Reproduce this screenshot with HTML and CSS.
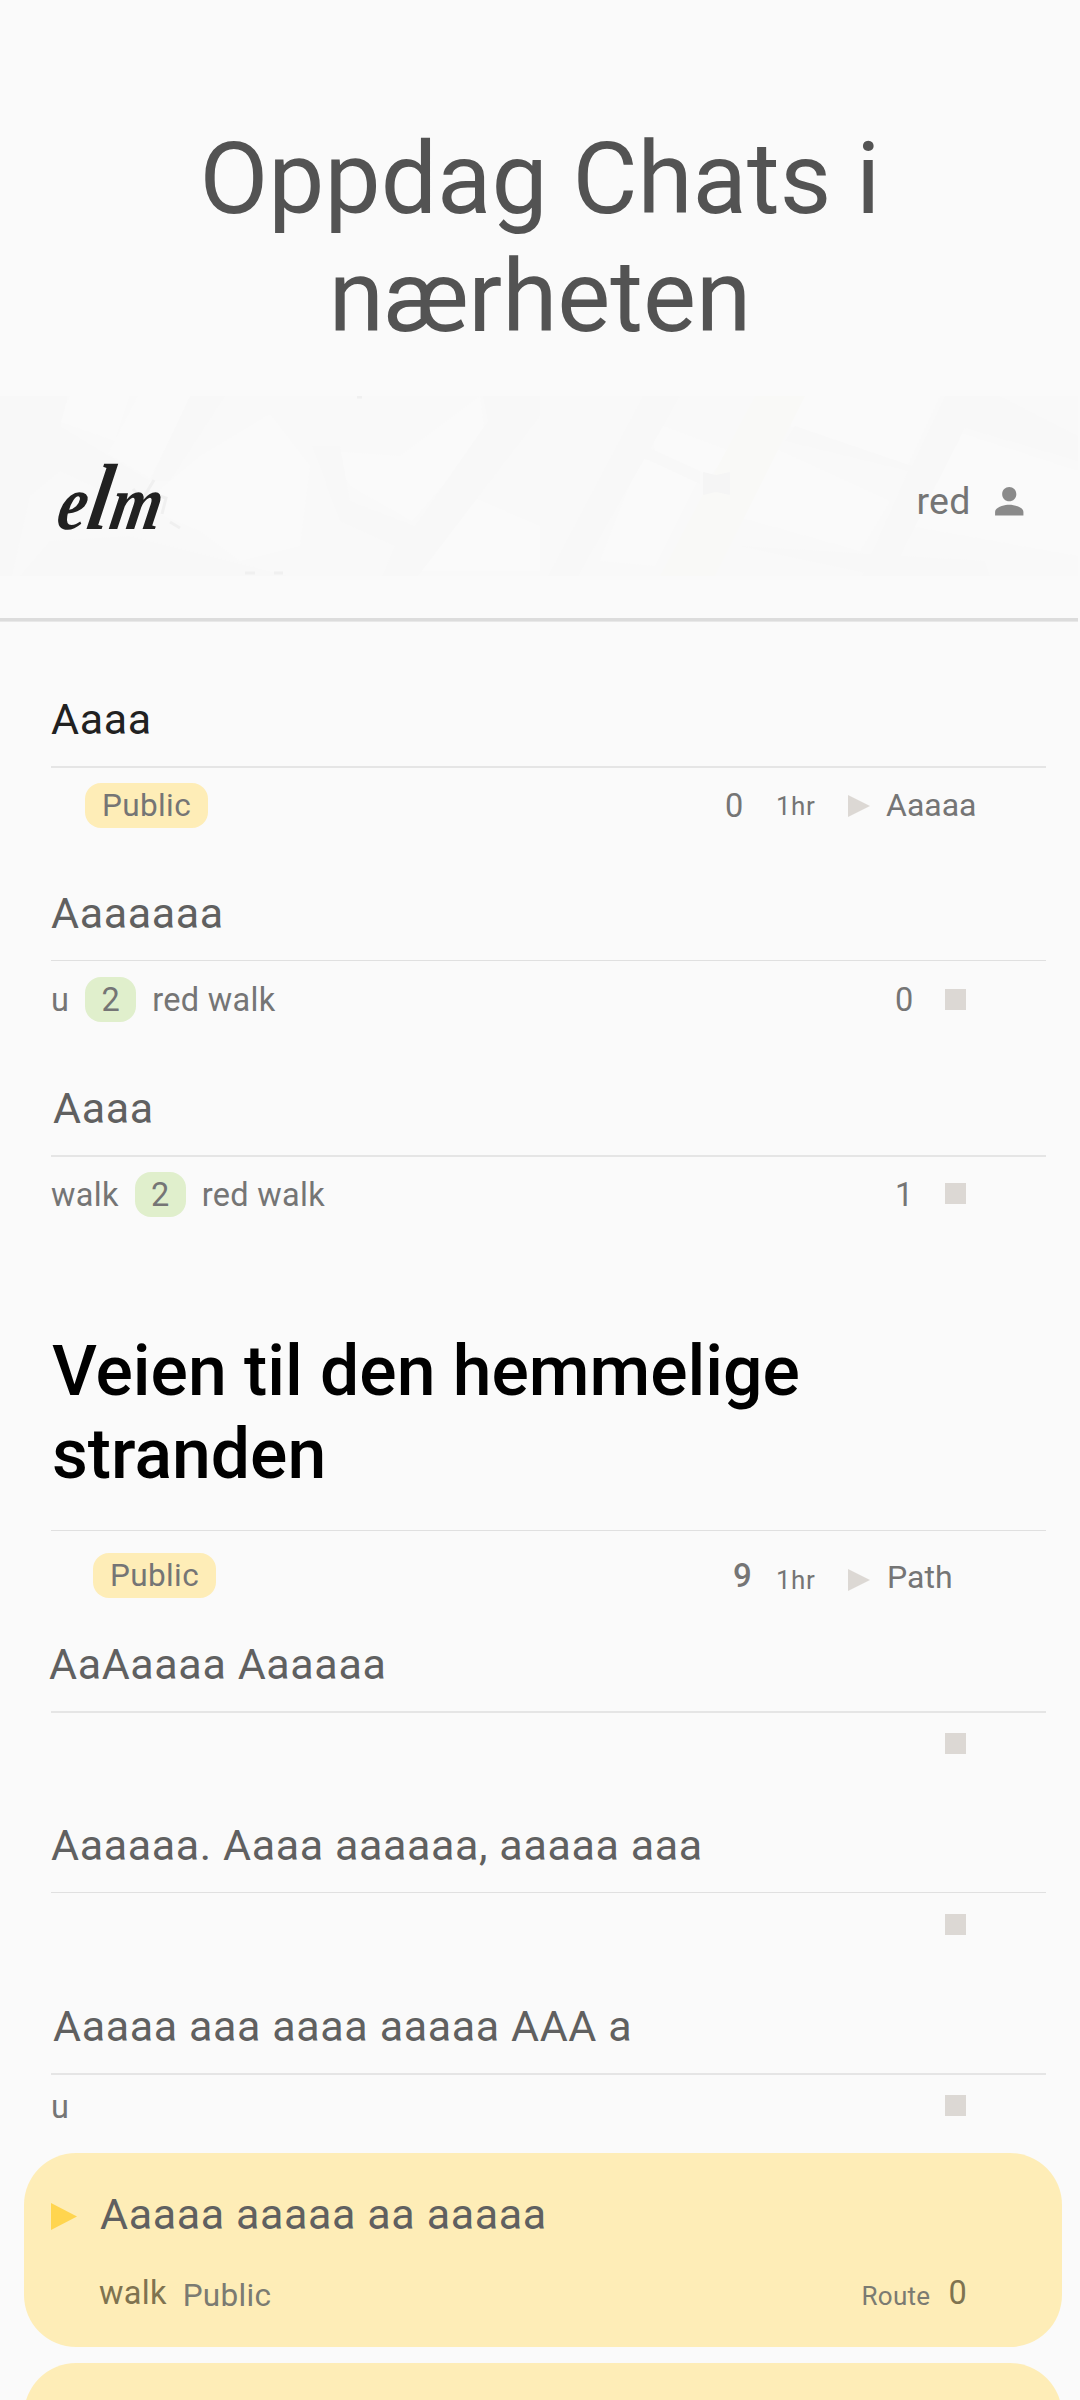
FILE: index.html
```html
<!DOCTYPE html>
<html lang="nb">
<head>
<meta charset="utf-8">
<title>Oppdag Chats i nærheten</title>
<link rel="stylesheet" href="styles.css">
</head>
<body>
<h1 class="hero">Oppdag Chats i<br>nærheten</h1>

<header class="topbar">
  <svg class="map" viewBox="0 0 1078 180" preserveAspectRatio="none" aria-hidden="true">
    <rect width="1078" height="180" fill="#f9f9f9"/>
    <g fill="#fafafa">
      <path d="M70 0H130L115 45 58 25ZM138 0H192L150 82 108 58ZM200 60 270 18 310 70 300 150 240 165 200 135 140 110ZM330 55 400 60 480 0 485 40 412 125 350 90ZM470 100 540 130V175H418ZM650 25 730 55 710 80 655 55ZM640 62 700 80 655 170 600 165ZM770 50 890 105 860 155 735 120ZM800 0 940 0 905 75 790 30ZM955 35 1078 75V160L910 130Z"/>
    </g>
    <g fill="#f8f8f8">
      <path d="M0 0H68L60 30 150 85 145 115 60 75 30 100 12 180H0ZM190 0H225L170 85H150ZM312 50H340L350 105 415 130 488 25 483 0H540V20L418 180H382L395 150 340 125ZM643 0H680L578 180H548ZM645 50 700 75V88L640 60ZM945 0H1000L1078 40V65L965 32 890 180H862L908 75 785 45 795 30 912 70Z"/>
      <path d="M50 145 130 140 290 180H20ZM740 150 985 165 990 180H880Z"/>
    </g>
    <path d="M755 0H805L715 180H660Z" fill="#f9f9f7"/>
    <path d="M703 76 716 79 730 76V99L716 96 703 99Z" fill="#f5f5f5"/>
    <path d="M133 93 142 104 154 84M155 108 160 100 166 102 162 118M170 126 180 132M245 177H255M274 177H283M357 1H362" fill="none" stroke="#f0f0f0" stroke-width="3"/>
  </svg>
  <span class="logo">e<span class="logo-tall">l</span>m</span>
  <div class="user">
    <span class="user-name">red</span>
    <svg class="user-icon" viewBox="0 0 24 24" aria-hidden="true"><path d="M12 12c2.21 0 4-1.79 4-4s-1.79-4-4-4-4 1.79-4 4 1.79 4 4 4zm0 2c-2.67 0-8 1.34-8 4v2h16v-2c0-2.66-5.33-4-8-4z"/></svg>
  </div>
</header>
<div class="divider"></div>

<main class="list">
  <article class="item first">
    <h2 class="title dark">Aaaa</h2>
    <div class="meta thick">
      <span class="tag yellow indent">Public</span>
      <div class="info"><span class="num">0</span><span class="time">1hr</span><i class="arrow"></i><span class="place">Aaaaa</span></div>
    </div>
  </article>
  <article class="item second">
    <h2 class="title">Aaaaaaa</h2>
    <div class="meta">
      <span class="word">u</span><span class="tag green">2</span><span class="word">red walk</span>
      <div class="info"><span class="count">0</span><i class="square"></i></div>
    </div>
  </article>
  <article class="item third">
    <h2 class="title nudge">Aaaa</h2>
    <div class="meta thick">
      <span class="word">walk</span><span class="tag green">2</span><span class="word">red walk</span>
      <div class="info"><span class="count">1</span><i class="square"></i></div>
    </div>
  </article>
  <article class="item feature">
    <h2 class="headline">Veien til den hemmelige<br>stranden</h2>
    <div class="meta roomy">
      <span class="tag yellow indent">Public</span>
      <div class="info"><span class="num strong">9</span><span class="time">1hr</span><i class="arrow"></i><span class="place">Path</span></div>
    </div>
  </article>
  <article class="item short">
    <h2 class="title outdent">AaAaaaa Aaaaaa</h2>
    <div class="meta thick"><div class="info"><i class="square"></i></div></div>
  </article>
  <article class="item short">
    <h2 class="title">Aaaaaa. Aaaa aaaaaa, aaaaa aaa</h2>
    <div class="meta"><div class="info"><i class="square"></i></div></div>
  </article>
  <article class="item last">
    <h2 class="title nudge">Aaaaa aaa aaaa aaaaa AAA a</h2>
    <div class="meta thick"><span class="word low">u</span><div class="info"><i class="square"></i></div></div>
  </article>
</main>

<section class="cards">
  <article class="card">
    <div class="card-head"><i class="play"></i><h2 class="title">Aaaaa aaaaa aa aaaaa</h2></div>
    <div class="card-meta">
      <span class="brown">walk</span><span class="access">Public</span>
      <span class="route">Route</span><span class="brown">0</span>
    </div>
  </article>
  <article class="card"></article>
</section>
</body>
</html>
```
FILE: styles.css
```css
* { box-sizing: border-box; }

html, body { height: 2400px; overflow: hidden; }

body {
  margin: 0;
  background: #fafafa;
  color: #757575;
  font-family: Roboto, "Liberation Sans", sans-serif;
}

h1, h2 { margin: 0; font-weight: 400; }

.hero {
  height: 396px;
  padding-top: 120px;
  text-align: center;
  font-size: 100px;
  line-height: 118px;
  color: #535353;
}

/* Header with the faded map behind it */
.topbar {
  position: relative;
  display: flex;
  justify-content: space-between;
  align-items: center;
  width: 1078px;
  height: 180px;
  padding: 30px 48px 0 56px;
}
.map { position: absolute; inset: 0; width: 100%; height: 100%; }
.logo {
  position: relative;
  padding-top: 4px;
  font: italic bold 78px/80px "Liberation Serif", serif;
  letter-spacing: 1px;
  color: #212121;
  transform: scaleX(0.84) skewX(-12deg);
  transform-origin: 0 75%;
}
.logo-tall { font-size: 94px; line-height: 1px; }
.user { position: relative; display: flex; align-items: center; gap: 17px; }
.user-name { font-size: 37.5px; letter-spacing: 0.2px; color: #757575; }
.user-icon { width: 42.5px; height: 42.5px; fill: #8a8a8a; }

.divider {
  width: 1078px;
  height: 3px;
  margin-top: 42px;
  background: #dcdcdc;
  box-shadow: 0 1px 0 #e8e8e8;
}

/* Chat list */
.list { padding: 69px 34px 0 51px; }
.first { height: 194px; }
.second { height: 195px; }
.third { height: 250px; }
.feature { height: 306px; }
.short { height: 181px; }
.last { height: 156px; }

.title {
  height: 76px;
  font-size: 43px;
  line-height: 59px;
  letter-spacing: 0.62px;
  color: #606060;
  white-space: nowrap;
}
.dark { color: #212121; }
.nudge { padding-left: 2px; }
.outdent { margin-left: -2px; }

.headline {
  height: 201px;
  padding: 1px 0 0 1px;
  font-size: 69.7px;
  font-weight: 500;
  line-height: 83px;
  color: #000;
}

.meta {
  display: flex;
  align-items: flex-start;
  border-top: 1px solid #e0e0e0;
  padding-top: 16px;
  font-size: 32.5px;
  line-height: 46px;
  letter-spacing: 0.3px;
}
.thick { border-top: 2px solid #e5e5e5; padding-top: 15px; }
.roomy { padding-top: 22px; }
.low { margin-top: -6px; }

.tag {
  height: 45px;
  border-radius: 16px;
  text-align: center;
}
.yellow { width: 123px; background: #feedb7; font-size: 31.5px; letter-spacing: 0.4px; line-height: 46px; }
.green { width: 51px; margin: 0 16px; background: #e0efcc; }
.indent { margin-left: 34px; }
.roomy .indent { margin-left: 42px; }

.info { display: flex; margin-left: auto; }
.num { width: 52px; }
.strong { width: 44px; font-weight: 500; font-size: 33px; }
.time { width: 72px; margin-left: -1px; font-size: 26px; letter-spacing: 0.5px; }
.arrow {
  width: 22px;
  height: 22px;
  margin: 12px 16px 0 0;
  background: #dcd8d4;
  clip-path: polygon(0 0, 100% 50%, 0 100%);
}
.place { width: 160px; font-size: 32px; line-height: 45px; letter-spacing: 0; }
.roomy .time { padding-top: 4px; }
.roomy .arrow { margin-top: 16px; }
.roomy .place { padding: 2px 0 0 1px; }
.count { width: 50px; }
.square { width: 21px; height: 21px; margin: 12px 80px 0 0; background: #dcd8d4; }
.third .square { margin-top: 11px; }
.short .square, .last .square { margin-top: 5px; }

/* Highlighted cards */
.cards {
  display: flex;
  flex-direction: column;
  gap: 16px;
  height: 247px;
  padding: 0 18px 0 24px;
  overflow: hidden;
}
.card {
  height: 194px;
  flex: none;
  padding: 32px 95px 0 27px;
  border-radius: 52px;
  background: #feedb7;
}
.card-head { display: flex; gap: 23px; }
.play {
  width: 26px;
  height: 27px;
  margin-top: 18px;
  background: #ffd54f;
  clip-path: polygon(0 0, 100% 50%, 0 100%);
}
.card-meta {
  display: flex;
  align-items: baseline;
  padding: 9px 0 0 48px;
  font-size: 32.5px;
  line-height: 47px;
  letter-spacing: 0.3px;
}
.brown { color: #7f7350; }
.access { position: relative; top: 2px; margin-left: 16px; font-size: 31.5px; color: #7b7b72; }
.route { position: relative; top: 1px; margin: 0 18px 0 auto; font-size: 26px; color: #7b7b72; }
```
